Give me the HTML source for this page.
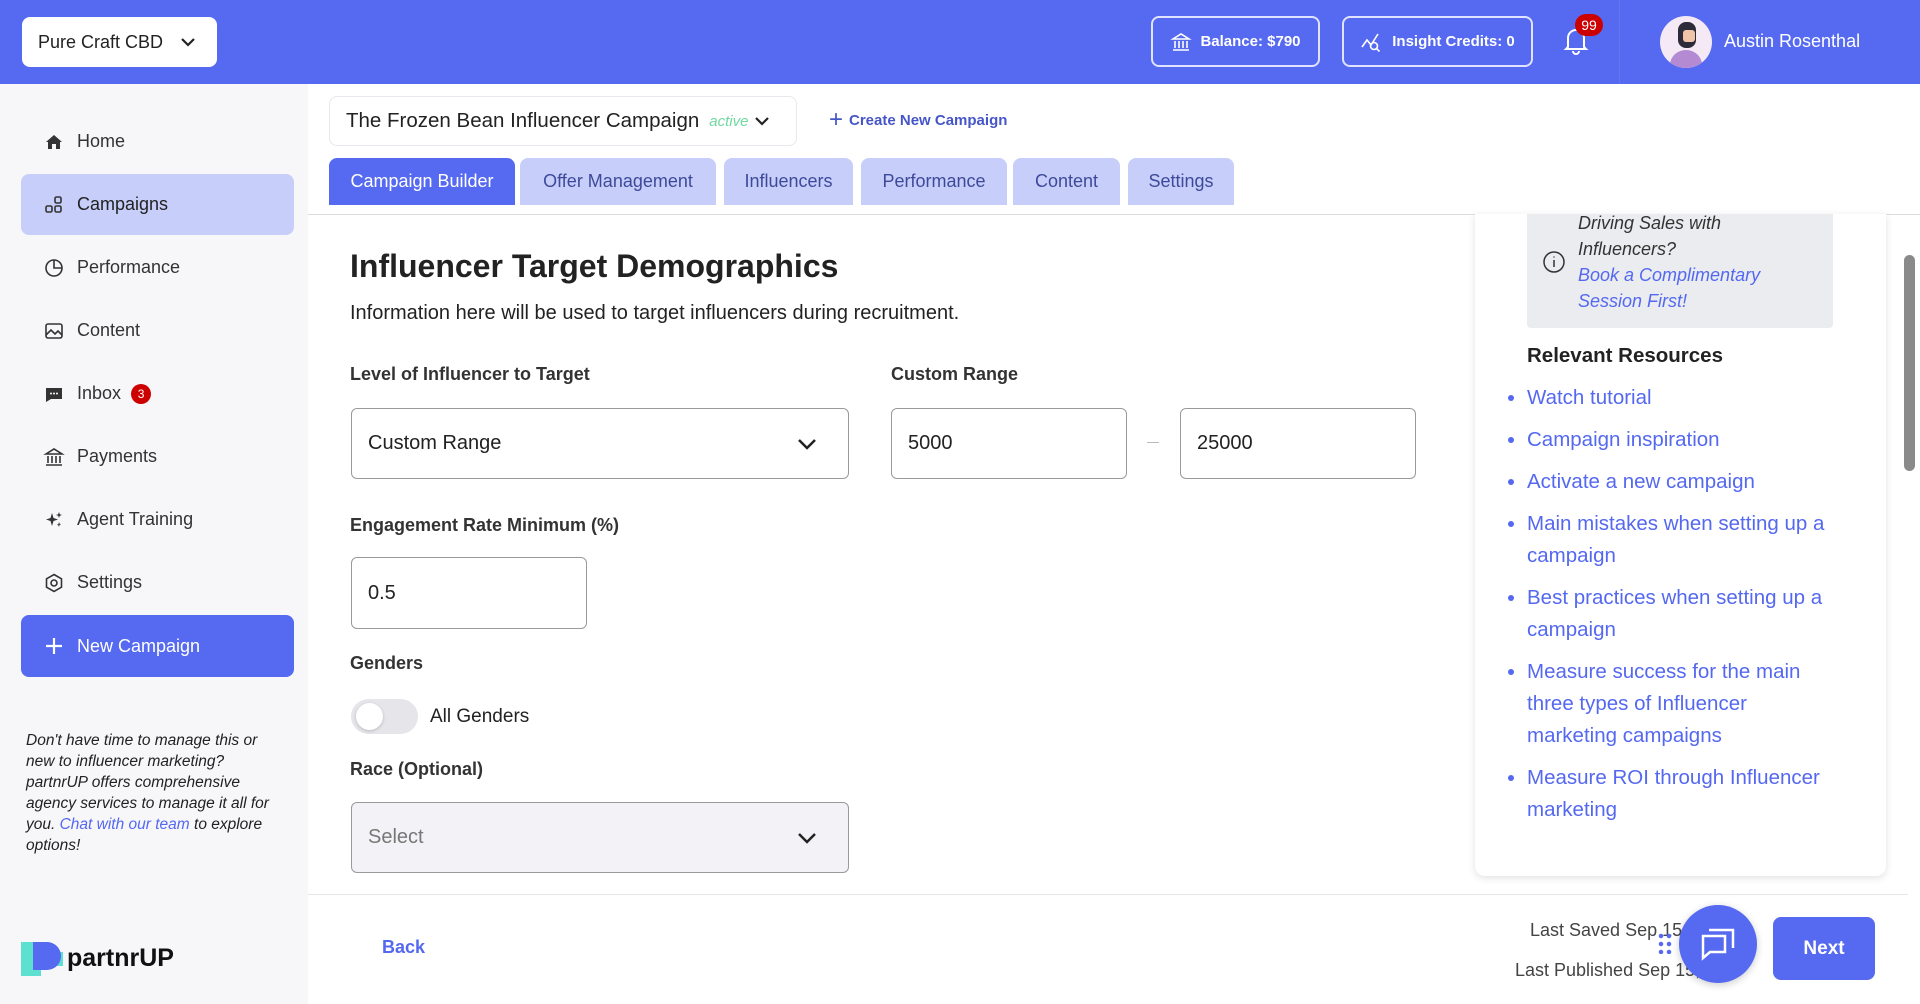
<!DOCTYPE html>
<html><head><meta charset="utf-8"><style>
*{box-sizing:border-box;margin:0;padding:0}
body{width:1920px;height:1004px;overflow:hidden;font-family:"Liberation Sans",sans-serif;background:#fff;position:relative;color:#222}
.a{position:absolute}
.hdr{left:0;top:0;width:1920px;height:84px;background:#5569f1}
.hbtn{border:2px solid #dfe3ff;border-radius:8px;color:#fff;font-size:15px;font-weight:bold;display:flex;align-items:center;justify-content:center;gap:8px;height:51px;top:16px}
.side{left:0;top:84px;width:308px;height:920px;background:#f7f7fa}
.nav{left:21px;width:273px;height:61px;display:flex;align-items:center;padding-left:22px;font-size:18px;color:#333;gap:12px;border-radius:8px}
.nav svg{width:22px;height:22px}
.tab{top:158px;height:47px;background:#c8cefa;color:#3d4a9a;font-size:18px;display:flex;align-items:center;justify-content:center;border-radius:8px 8px 0 0}
.lbl{font-size:18px;font-weight:bold;color:#333}
.inp{border:1.5px solid #9a9a9a;border-radius:6px;font-size:20px;display:flex;align-items:center;padding-left:16px;color:#222;background:#fff}
.res li{font-size:20.5px;color:#5468f0;line-height:32px;margin-bottom:10px}
</style></head><body>
<div class="a hdr"></div>
<div class="a" style="left:22px;top:17px;width:195px;height:50px;background:#fff;border-radius:8px;font-size:18px;display:flex;align-items:center;padding-left:16px;color:#222">Pure Craft CBD<svg class="a" style="left:158px;top:18px" width="16" height="14" viewBox="0 0 16 14"><path d="M2 4l6 6 6-6" stroke="#222" stroke-width="2.2" fill="none"/></svg></div>
<div class="a hbtn" style="left:1151px;width:169px"><svg width="22" height="22" viewBox="0 0 22 22" fill="none" stroke="#fff" stroke-width="1.6"><path d="M3 8L11 3l8 5zM5 10v7M9 10v7M13 10v7M17 10v7M3 19h16"/></svg>Balance: $790</div>
<div class="a hbtn" style="left:1342px;width:191px"><svg width="24" height="22" viewBox="0 0 24 22" fill="none" stroke="#fff" stroke-width="1.6"><path d="M2 16l5-7 4 5 7-11"/><circle cx="14" cy="15" r="3.5"/><path d="M16.5 17.5l3 3"/></svg>Insight Credits: 0</div>
<svg class="a" style="left:1563px;top:26px" width="26" height="30" viewBox="0 0 26 30" fill="none" stroke="#fff" stroke-width="2"><path d="M5 21V12a8 8 0 0116 0v9l2 2H3z"/><path d="M10 25a3 3 0 006 0"/></svg>
<div class="a" style="left:1575px;top:14px;width:28px;height:22px;background:#c00;border-radius:11px;color:#fff;font-size:14px;text-align:center;line-height:22px">99</div>
<div class="a" style="left:1619px;top:0;width:1px;height:84px;background:#6376f2"></div>
<div class="a" style="left:1660px;top:16px;width:52px;height:52px;border-radius:50%;background:#f4e9f5;overflow:hidden"><div class="a" style="left:10px;top:34px;width:32px;height:30px;border-radius:50%;background:#b48bd3"></div><div class="a" style="left:18px;top:6px;width:18px;height:26px;border-radius:8px;background:#2c2b3a"></div><div class="a" style="left:23px;top:14px;width:12px;height:12px;background:#f0c4a8;border-radius:3px"></div></div>
<div class="a" style="left:1724px;top:31px;color:#fff;font-size:18px">Austin Rosenthal</div>

<div class="a side"></div>
<div class="a nav" style="top:111px"><svg viewBox="0 0 22 22"><path d="M3 11L11 4l8 7h-2v7h-4v-5H9v5H5v-7z" fill="#333"/></svg>Home</div>
<div class="a nav" style="top:174px;background:#c8cefa;color:#222"><svg viewBox="0 0 22 22" fill="none" stroke="#333" stroke-width="1.6"><rect x="12" y="3" width="6" height="6" rx="1.5"/><rect x="3" y="12" width="6" height="6" rx="1.5"/><rect x="12" y="12" width="6" height="6" rx="1.5"/></svg>Campaigns</div>
<div class="a nav" style="top:237px"><svg viewBox="0 0 22 22" fill="none" stroke="#333" stroke-width="1.6"><circle cx="11" cy="11" r="8"/><path d="M11 3v8h8"/></svg>Performance</div>
<div class="a nav" style="top:300px"><svg viewBox="0 0 22 22" fill="none" stroke="#333" stroke-width="1.6"><rect x="3" y="4" width="16" height="14" rx="2"/><path d="M3 15l5-5 4 4 3-3 4 4"/></svg>Content</div>
<div class="a nav" style="top:363px"><svg viewBox="0 0 22 22"><path d="M3 5h16v11H8l-5 3z" fill="#333"/><circle cx="8" cy="10.5" r="1" fill="#fff"/><circle cx="11" cy="10.5" r="1" fill="#fff"/><circle cx="14" cy="10.5" r="1" fill="#fff"/></svg>Inbox<span style="background:#c00;color:#fff;font-size:12px;width:20px;height:20px;border-radius:50%;text-align:center;line-height:20px;margin-left:-2px">3</span></div>
<div class="a nav" style="top:426px"><svg viewBox="0 0 22 22" fill="none" stroke="#333" stroke-width="1.6"><path d="M3 8L11 3l8 5zM5 10v7M9 10v7M13 10v7M17 10v7M3 19h16"/></svg>Payments</div>
<div class="a nav" style="top:489px"><svg viewBox="0 0 22 22" fill="#333"><path d="M9 4l1.5 5L15 10.5 10.5 12 9 17l-1.5-5L3 10.5 7.5 9zM16 3l.8 2.2L19 6l-2.2.8L16 9l-.8-2.2L13 6l2.2-.8zM16 13l.6 1.6 1.6.6-1.6.6L16 18l-.6-1.6-1.6-.6 1.6-.6z"/></svg>Agent Training</div>
<div class="a nav" style="top:552px"><svg viewBox="0 0 22 22" fill="none" stroke="#333" stroke-width="1.6"><path d="M11 2.5l7.5 4.3v8.4L11 19.5l-7.5-4.3V6.8z"/><circle cx="11" cy="11" r="3"/></svg>Settings</div>
<div class="a nav" style="top:615px;height:62px;background:#5569f1;color:#fff"><svg viewBox="0 0 22 22" stroke="#fff" stroke-width="2.2"><path d="M11 3v16M3 11h16"/></svg>New Campaign</div>
<div class="a" style="left:26px;top:730px;width:250px;font-size:15.5px;font-style:italic;line-height:21px;color:#222">Don't have time to manage this or new to influencer marketing? partnrUP offers comprehensive agency services to manage it all for you. <span style="color:#5468f0">Chat with our team</span> to explore options!</div>
<div class="a" style="left:21px;top:942px;width:20px;height:34px;background:#5ee0d0"></div>
<div class="a" style="left:21px;top:952px;width:42px;height:14px;background:#5ee0d0"></div>
<div class="a" style="left:33px;top:942px;width:28px;height:28px;background:#5569f1;border-radius:0 14px 14px 0"></div>
<div class="a" style="left:67px;top:944px;font-size:25px;font-weight:bold;color:#111">partnrUP</div>

<div class="a" style="left:329px;top:96px;width:468px;height:50px;border:1px solid #e8e8ee;border-radius:8px;font-size:20.5px;display:flex;align-items:center;padding-left:16px">The Frozen Bean Influencer Campaign<span style="color:#6fd9a0;font-style:italic;font-size:15px;margin-left:10px">active</span><svg style="margin-left:6px" width="16" height="14" viewBox="0 0 16 14"><path d="M2 4l6 6 6-6" stroke="#222" stroke-width="2.2" fill="none"/></svg></div>
<div class="a" style="left:829px;top:110px;font-size:15px;font-weight:bold;color:#4656c8;display:flex;align-items:center;gap:6px"><span style="font-size:24px;font-weight:normal;line-height:20px">+</span>Create New Campaign</div>
<div class="a tab" style="left:329px;width:186px;background:#5569f1;color:#fff">Campaign Builder</div>
<div class="a tab" style="left:520px;width:196px">Offer Management</div>
<div class="a tab" style="left:724px;width:129px">Influencers</div>
<div class="a tab" style="left:861px;width:146px">Performance</div>
<div class="a tab" style="left:1013px;width:107px">Content</div>
<div class="a tab" style="left:1128px;width:106px">Settings</div>
<div class="a" style="left:308px;top:214px;width:1612px;height:1px;background:#ddd"></div>

<div class="a" style="left:350px;top:248px;font-size:32px;font-weight:bold;color:#222">Influencer Target Demographics</div>
<div class="a" style="left:350px;top:302px;font-size:20px;color:#222">Information here will be used to target influencers during recruitment.</div>
<div class="a lbl" style="left:350px;top:364px">Level of Influencer to Target</div>
<div class="a lbl" style="left:891px;top:364px">Custom Range</div>
<div class="a inp" style="left:351px;top:408px;width:498px;height:71px">Custom Range<svg class="a" style="right:30px;top:27px" width="22" height="16" viewBox="0 0 22 16"><path d="M3 4l8 8 8-8" stroke="#222" stroke-width="2.5" fill="none"/></svg></div>
<div class="a inp" style="left:891px;top:408px;width:236px;height:71px">5000</div>
<div class="a" style="left:1147px;top:442px;width:12px;height:1px;background:#bbb"></div>
<div class="a inp" style="left:1180px;top:408px;width:236px;height:71px">25000</div>
<div class="a lbl" style="left:350px;top:515px">Engagement Rate Minimum (%)</div>
<div class="a inp" style="left:351px;top:557px;width:236px;height:72px">0.5</div>
<div class="a lbl" style="left:350px;top:653px">Genders</div>
<div class="a" style="left:351px;top:699px;width:67px;height:35px;border-radius:18px;background:#e6e6ea"></div>
<div class="a" style="left:356px;top:703px;width:27px;height:27px;border-radius:50%;background:#fff;box-shadow:0 1px 3px rgba(0,0,0,.2)"></div>
<div class="a" style="left:430px;top:706px;font-size:19px">All Genders</div>
<div class="a lbl" style="left:350px;top:759px">Race (Optional)</div>
<div class="a inp" style="left:351px;top:802px;width:498px;height:71px;background:#f3f3f7;color:#777">Select<svg class="a" style="right:30px;top:27px" width="22" height="16" viewBox="0 0 22 16"><path d="M3 4l8 8 8-8" stroke="#222" stroke-width="2.5" fill="none"/></svg></div>

<div class="a" style="left:1475px;top:214px;width:411px;height:662px;background:#fff;border-radius:0 0 10px 10px;box-shadow:0 2px 8px rgba(0,0,0,.12)"></div>
<div class="a" style="left:1527px;top:214px;width:306px;height:114px;background:#eaecef;border-radius:0 0 4px 4px"></div>
<svg class="a" style="left:1542px;top:250px" width="24" height="24" viewBox="0 0 24 24" fill="none" stroke="#333" stroke-width="1.5"><circle cx="12" cy="12" r="10"/><path d="M12 10v7M12 6.5v1"/></svg>
<div class="a" style="left:1578px;top:210px;font-size:18px;font-style:italic;line-height:26px;color:#333">Driving Sales with<br>Influencers?<br><span style="color:#5468f0">Book a Complimentary<br>Session First!</span></div>
<div class="a" style="left:1527px;top:344px;font-size:20.5px;font-weight:bold;color:#222">Relevant Resources</div>
<ul class="a res" style="left:1527px;top:382px;width:300px;padding-left:0;list-style-position:outside">
<li>Watch tutorial</li><li>Campaign inspiration</li><li>Activate a new campaign</li><li>Main mistakes when setting up a campaign</li><li>Best practices when setting up a campaign</li><li>Measure success for the main three types of Influencer marketing campaigns</li><li>Measure ROI through Influencer marketing</li></ul>
<div class="a" style="left:1904px;top:255px;width:11px;height:216px;background:#8a8a8a;border-radius:6px"></div>

<div class="a" style="left:308px;top:894px;width:1600px;height:1px;background:#e6e6e6"></div>
<div class="a" style="left:382px;top:937px;font-size:18px;font-weight:bold;color:#5468f0">Back</div>
<div class="a" style="left:1530px;top:920px;font-size:18px;color:#444">Last Saved Sep 15, 2</div>
<div class="a" style="left:1515px;top:960px;font-size:18px;color:#444">Last Published Sep 15, 2</div>
<div class="a" style="left:1657px;top:932px;width:16px;height:22px;background:radial-gradient(circle,#5569f1 2px,transparent 2.5px) 0 0/8px 8px"></div>
<div class="a" style="left:1679px;top:905px;width:78px;height:78px;border-radius:50%;background:#5569f1;box-shadow:0 2px 8px rgba(0,0,0,.2)"></div>
<svg class="a" style="left:1698px;top:924px" width="40" height="40" viewBox="0 0 40 40" fill="none" stroke="#fff" stroke-width="2.5"><path d="M5 12h22v16H12l-7 6z"/><path d="M11 6h24v18"/></svg>
<div class="a" style="left:1773px;top:917px;width:102px;height:63px;background:#5569f1;border-radius:8px;color:#fff;font-size:19px;font-weight:bold;display:flex;align-items:center;justify-content:center">Next</div>
</body></html>
